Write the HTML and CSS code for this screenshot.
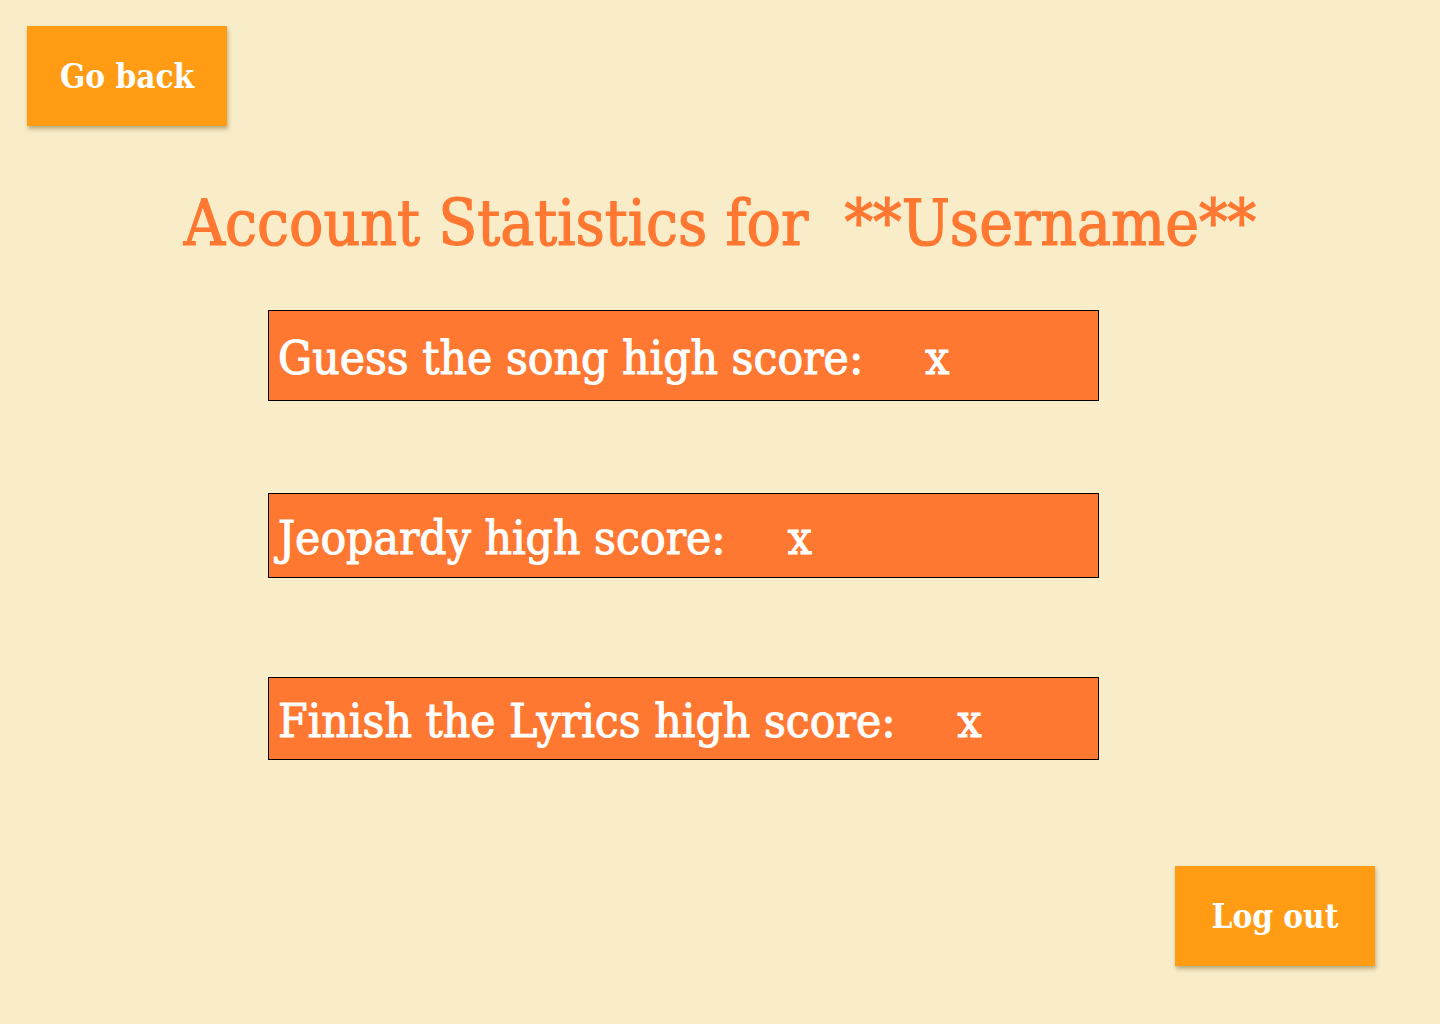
FILE: index.html
```html
<!DOCTYPE html>
<html lang="en">
<head>
<meta charset="utf-8">
<title>Account Statistics</title>
<link rel="stylesheet" href="styles.css">
</head>
<body>
<div class="page">
  <div class="top">
    <button class="btn">Go back</button>
  </div>
  <h1 class="title">Account Statistics for&nbsp; **Username**</h1>
  <div class="stats">
    <div class="stat stat-1">Guess the song high score:<span class="val">x</span></div>
    <div class="stat stat-2">Jeopardy high score:<span class="val">x</span></div>
    <div class="stat stat-3">Finish the Lyrics high score:<span class="val">x</span></div>
  </div>
  <div class="bottom">
    <button class="btn">Log out</button>
  </div>
</div>
</body>
</html>
```

FILE: styles.css
```css
html, body {
  margin: 0;
  padding: 0;
  background: #f8ecc9;
}
body {
  font-family: "DejaVu Serif Condensed", "DejaVu Serif", serif;
  font-stretch: condensed;
}
.page {
  width: 1440px;
  height: 1024px;
  display: flex;
  flex-direction: column;
}
.top {
  padding: 26px 0 0 27px;
  display: flex;
}
.btn {
  width: 200px;
  height: 100px;
  border: none;
  background: #ff9c14;
  color: #fff;
  font-family: inherit;
  font-stretch: condensed;
  font-weight: bold;
  font-size: 33px;
  box-shadow: 1px 3px 4px rgba(120, 100, 40, 0.45);
  padding: 0;
}
.title {
  margin: 57px 0 0;
  text-align: center;
  color: #ff7832;
  font-weight: normal;
  font-size: 63.5px;
  line-height: 80px;
  height: 80px;
  -webkit-text-stroke: 1.2px #ff7832;
}
.stats {
  margin: 47px 0 0 268px;
  display: flex;
  flex-direction: column;
}
.stat {
  background: #ff7832;
  border: 1px solid #000;
  color: #fff;
  font-size: 47.5px;
  display: flex;
  align-items: center;
  padding-left: 9px;
  box-sizing: border-box;
  width: 831px;
  -webkit-text-stroke: 1px #fff;
}
.stat-1 { height: 91px; padding-top: 3px; }
.stat-2 { height: 85px; margin-top: 92px; padding-top: 3px; }
.stat-3 { height: 83px; margin-top: 99px; padding-top: 3px; }
.val {
  margin-left: 62px;
}
.bottom {
  display: flex;
  justify-content: flex-end;
  padding: 106px 65px 0 0;
}
```
